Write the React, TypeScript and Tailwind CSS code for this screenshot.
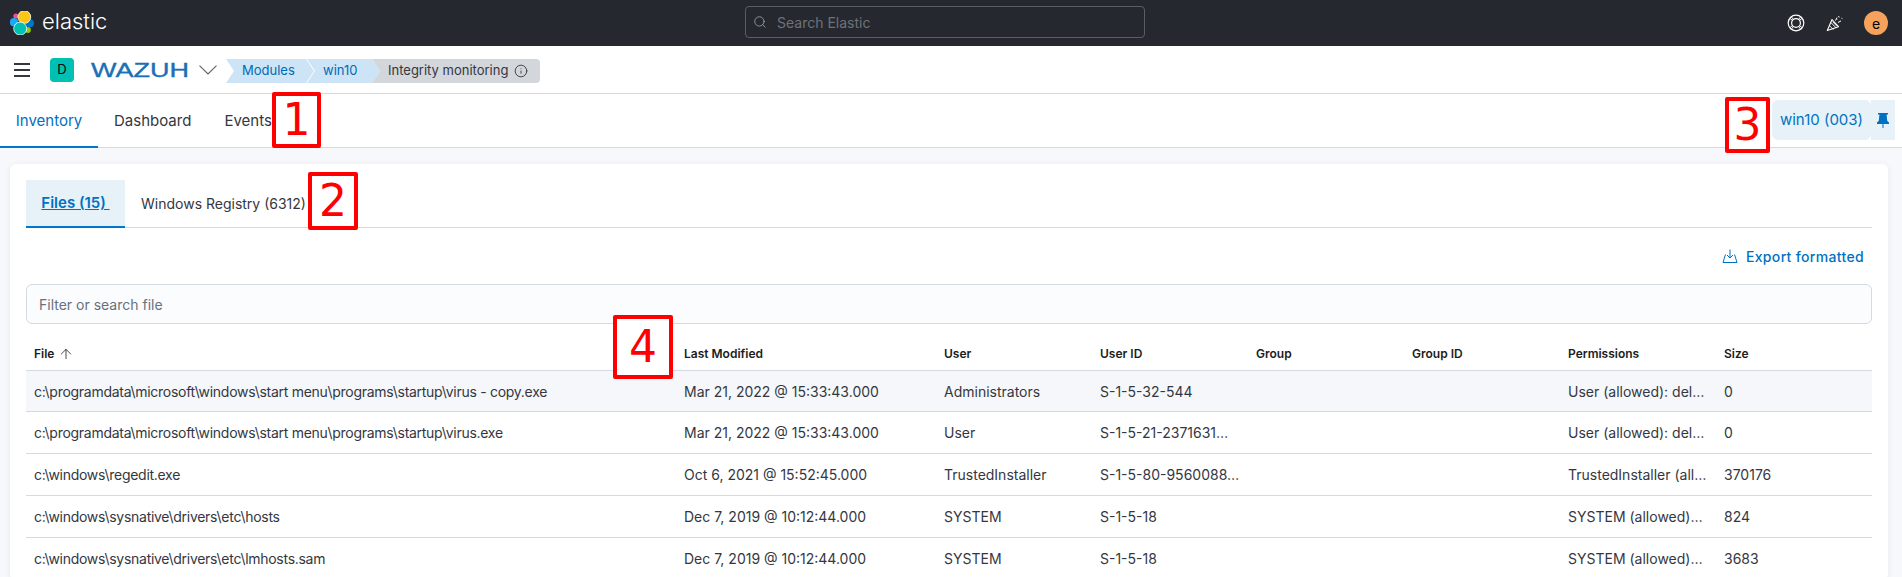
import { ArrowUp, Info, Search } from "lucide-react";

const rows = [
  ["c:\\programdata\\microsoft\\windows\\start menu\\programs\\startup\\virus - copy.exe", "Mar 21, 2022 @ 15:33:43.000", "Administrators", "S-1-5-32-544", "", "", "User (allowed): del…", "0"],
  ["c:\\programdata\\microsoft\\windows\\start menu\\programs\\startup\\virus.exe", "Mar 21, 2022 @ 15:33:43.000", "User", "S-1-5-21-2371631…", "", "", "User (allowed): del…", "0"],
  ["c:\\windows\\regedit.exe", "Oct 6, 2021 @ 15:52:45.000", "TrustedInstaller", "S-1-5-80-9560088…", "", "", "TrustedInstaller (all…", "370176"],
  ["c:\\windows\\sysnative\\drivers\\etc\\hosts", "Dec 7, 2019 @ 10:12:44.000", "SYSTEM", "S-1-5-18", "", "", "SYSTEM (allowed)…", "824"],
  ["c:\\windows\\sysnative\\drivers\\etc\\lmhosts.sam", "Dec 7, 2019 @ 10:12:44.000", "SYSTEM", "S-1-5-18", "", "", "SYSTEM (allowed)…", "3683"],
];

const heads = ["Last Modified", "User", "User ID", "Group", "Group ID", "Permissions", "Size"];
const cols = "grid grid-cols-[650px_260px_156px_156px_156px_156px_156px_148px]";

function Mark({ n, className }: { n: string; className: string }) {
  return (
    <div className={`absolute flex items-center justify-center rounded-[2px] border-[4px] border-[#ff0000] bg-white font-['DejaVu_Sans',sans-serif] text-[44px] leading-none text-[#ff0000] ${className}`}>
      {n}
    </div>
  );
}

export default function App() {
  return (
    <div className="relative h-[577px] w-[1902px] overflow-hidden bg-[#f7f8fc] font-['Inter',sans-serif] text-[14px] text-[#343741]">
      <header className="flex h-[46px] items-center bg-[#25282f] pl-[10px] pr-[14px]">
        <div className="flex w-[735px] items-center">
          <svg width="24" height="24" viewBox="0 0 24 24" className="shrink-0">
            <circle cx="5.8" cy="5" r="2.5" fill="#f04e98" />
            <circle cx="4" cy="11.2" r="4.1" fill="#1ba9f5" />
            <circle cx="18" cy="19" r="2.9" fill="#93c90e" />
            <circle cx="20" cy="12.2" r="4" fill="#0077cc" />
            <circle cx="14.3" cy="6" r="6.4" fill="#fec514" stroke="#fff" strokeWidth="0.8" />
            <circle cx="10.2" cy="17.6" r="6.5" fill="#00bfb3" stroke="#fff" strokeWidth="0.8" />
          </svg>
          <span className="ml-[8px] -mt-[4px] text-[22px] font-light leading-none text-white">elastic</span>
        </div>
        <div className="-mt-[2px] flex h-[32px] w-[400px] items-center rounded-[4px] border border-[#5a5d63] pl-[7px] text-[#6f7278]">
          <Search size={14} strokeWidth={1.2} className="text-[#b5b7bb]" />
          <span className="ml-[10px]">Search Elastic</span>
        </div>
        <div className="ml-auto flex items-center">
          <svg width="18" height="18" viewBox="0 0 18 18" fill="none" stroke="#fff" strokeWidth="1.2">
            <circle cx="9" cy="9" r="7.8" />
            <circle cx="9" cy="9" r="4.4" />
            <path d="M4.2 2.6 6.4 5.6M2.6 4.2 5.6 6.4M13.8 2.6 11.6 5.6M15.4 4.2 12.4 6.4M4.2 15.4 6.4 12.4M2.6 13.8 5.6 11.6M13.8 15.4 11.6 12.4M15.4 13.8 12.4 11.6" strokeWidth="0.9" />
          </svg>
          <svg width="18" height="18" viewBox="0 0 18 18" fill="none" stroke="#fff" strokeWidth="1.1" strokeLinejoin="round" className="ml-[21px]">
            <path d="M1.3 16.5 6 5.5l6.5 7.2z" />
            <path d="M3.4 11.6l4 4M4.8 8.4l5.2 5.4M6.6 7.6l4.2 4.5" strokeWidth="0.9" />
            <path d="M9.5 6.5l1.6-3M12 8.5l3-1.6M12.6 2l.6 1.4M15.5 4.2l.9.3M11 5.5l.5.5" strokeWidth="1" />
          </svg>
          <div className="ml-[20px] flex h-[24px] w-[24px] items-center justify-center rounded-full bg-[#f5a35c] text-[14px] text-black">e</div>
        </div>
      </header>

      <div className="flex h-[48px] items-center border-b border-[#d3dae6] bg-white pl-[14px]">
        <div className="flex h-[14px] w-[16px] flex-col justify-between">
          <span className="h-[2px] bg-[#343741]" />
          <span className="h-[2px] bg-[#343741]" />
          <span className="h-[2px] bg-[#343741]" />
        </div>
        <div className="ml-[20px] flex h-[24px] w-[24px] items-center justify-center rounded-[4px] bg-[#00bfb3] text-[13px] text-black">D</div>
        <svg width="98" height="18" viewBox="0 0 98 18" className="ml-[17px] overflow-visible">
          <text x="0" y="16" textLength="98" lengthAdjust="spacingAndGlyphs" fontFamily="Liberation Sans" fontSize="21" fill="#1a6fb5" stroke="#1a6fb5" strokeWidth="0.35">WAZUH</text>
        </svg>
        <svg width="18" height="10" viewBox="0 0 18 10" fill="none" stroke="#5a5f68" strokeWidth="1.1" className="ml-[10px]">
          <path d="M0.5 0.7 9 8.9l8.5-8.2" />
        </svg>
        <div className="ml-[9px] mt-[3px] flex h-[24px] items-center text-[13px]">
          <span className="flex h-full w-[88px] items-center bg-[#cce4f5] pl-[16px] text-[#006bb8] [clip-path:polygon(0_0,calc(100%-8px)_0,100%_50%,calc(100%-8px)_100%,0_100%,8px_50%)]">Modules</span>
          <span className="-ml-[7px] flex h-full w-[73px] items-center bg-[#cce4f5] pl-[16px] text-[#006bb8] [clip-path:polygon(0_0,calc(100%-8px)_0,100%_50%,calc(100%-8px)_100%,0_100%,8px_50%)]">win10</span>
          <span className="-ml-[8px] flex h-full w-[168px] items-center rounded-r-[4px] bg-[#d3d6da] pl-[16px] text-[#343741] [clip-path:polygon(0_0,100%_0,100%_100%,0_100%,8px_50%)]">
            Integrity monitoring
            <Info size={14} strokeWidth={1.5} className="ml-[6px]" />
          </span>
        </div>
      </div>

      <div className="flex h-[54px] items-start border-b border-[#d3dae6] bg-white text-[15px]">
        <div className="flex h-[54px] w-[98px] items-center justify-center border-b-2 border-[#0077cc] pt-[2px] text-[#0071c2]">Inventory</div>
        <div className="ml-[16px] flex h-[53px] items-center pt-[2px]">Dashboard</div>
        <div className="ml-[33px] flex h-[53px] items-center pt-[2px]">Events</div>
        <div className="ml-auto mr-[7px] mt-[6px] flex h-[40px]">
          <div className="flex w-[99px] items-center justify-center rounded-[6px] bg-[#e6f1f8] text-[#0071c2]">win10 (003)</div>
          <div className="flex w-[24px] items-center justify-center bg-[#e6f1f8]">
            <svg width="12" height="15" viewBox="0 0 12 15" fill="#0071c2">
              <path d="M1 0h10v1.6H9.6l.6 6.2L12 9.6V11H6.5v4h-1v-4H0V9.6l1.8-1.8.6-6.2H1z" />
            </svg>
          </div>
        </div>
      </div>

      <main className="ml-[10px] mr-[14px] mt-[16px] rounded-[6px] bg-white px-[16px] pt-[16px] shadow-[0_1px_6px_rgba(0,0,0,0.07)]">
        <div className="flex h-[48px] border-b border-[#d3dae6]">
          <div className="flex h-[48px] w-[99px] items-center justify-center border-b-2 border-[#0077cc] bg-[#e6f1f8] text-[15px] font-semibold text-[#0071c2] underline">Files (15)&nbsp;</div>
          <div className="ml-[16px] flex h-[47px] items-center">Windows Registry (6312)</div>
        </div>
        <div className="flex h-[56px] items-center justify-end pr-[8px] text-[#0071c2]">
          <svg width="16" height="16" viewBox="0 0 16 16" fill="none" stroke="currentColor" strokeWidth="1">
            <path d="M3.5 6.5 1 14.5h14l-2.5-8M8 1.5v8M5 7l3 3 3-3" />
          </svg>
          <span className="ml-[8px] font-medium tracking-[0.33px]">Export formatted</span>
        </div>
        <div className="flex h-[40px] items-center rounded-[6px] border border-[#d3dae6] bg-[#fbfcfd] pl-[12px] text-[#69707d]">Filter or search file</div>

        <div className={`${cols} h-[47px] items-end border-b border-[#d3dae6] pb-[7px] text-[12px] font-semibold text-[#1a1c21]`}>
          <div className="flex items-center pl-[8px]">
            File
            <ArrowUp size={16} strokeWidth={1.2} className="ml-[4px]" />
          </div>
          {heads.map((h) => (
            <div key={h} className="pl-[8px]">{h}</div>
          ))}
        </div>
        {rows.map((r, i) => (
          <div key={r[0]} className={`${cols} items-center border-b border-[#d3dae6] ${i === 0 ? "h-[41px] bg-[#f5f7fa]" : "h-[42px]"}`}>
            {r.map((c, j) => (
              <div key={j} className={`whitespace-nowrap pl-[8px] ${j === 0 ? "tracking-[-0.28px]" : ""}`}>{c}</div>
            ))}
          </div>
        ))}
      </main>

      <Mark n="1" className="left-[272px] top-[92px] h-[56px] w-[49px]" />
      <Mark n="2" className="left-[308px] top-[172px] h-[58px] w-[50px]" />
      <Mark n="3" className="left-[1725px] top-[97px] h-[56px] w-[45px]" />
      <Mark n="4" className="left-[613px] top-[315px] h-[64px] w-[60px]" />
    </div>
  );
}
